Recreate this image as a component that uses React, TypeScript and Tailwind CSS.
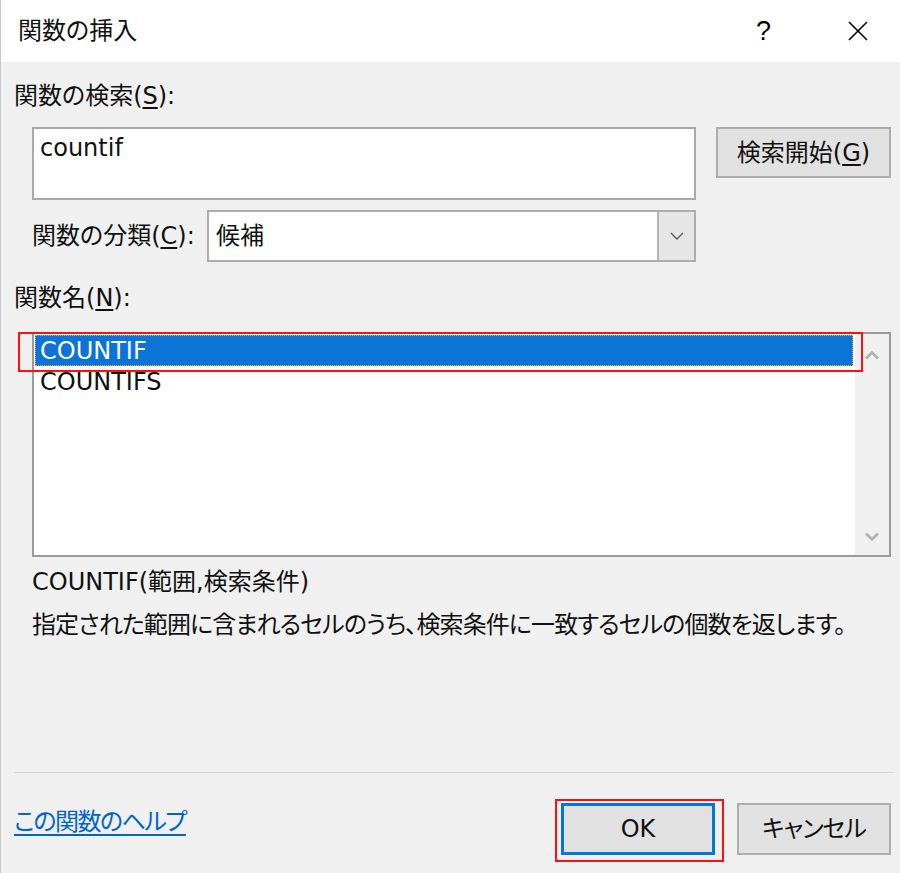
import React from "react";

function Chevron({ dir, className }: { dir: "up" | "down"; className?: string }) {
  return (
    <svg width="16" height="10" viewBox="0 0 16 10" className={className}>
      <path
        d={dir === "up" ? "M2 8.5 L8 2.5 L14 8.5" : "M2 1.5 L8 7.5 L14 1.5"}
        fill="none"
        stroke="currentColor"
        strokeWidth="2.6"
      />
    </svg>
  );
}

function Key({ k }: { k: string }) {
  return <span className="underline underline-offset-[3px]">{k}</span>;
}

export default function App() {
  return (
    <div className="flex h-[873px] w-[900px] flex-col overflow-hidden border-l border-[#c8c8c8] bg-[#f0f0f0] font-['DejaVu_Sans','Noto_Sans_CJK_JP',sans-serif] text-[24px] text-[#111] [font-feature-settings:'palt']">
      {/* Title bar */}
      <div className="flex h-[62px] items-center bg-white pl-[17px] pr-[31px]">
        <span className="leading-none">関数の挿入</span>
        <span className="ml-auto font-['Liberation_Sans',sans-serif] text-[27px] leading-none text-black">?</span>
        <svg width="22" height="22" viewBox="0 0 22 22" className="ml-[76px] text-black">
          <path d="M2 2 L20 20 M20 2 L2 20" stroke="currentColor" strokeWidth="1.6" />
        </svg>
      </div>

      {/* Body */}
      <div className="flex flex-col pl-[13px] pr-[9px] pt-[19px]">
        <div className="h-[30px] leading-[30px]">
          関数の検索(<Key k="S" />):
        </div>

        <div className="ml-[18px] mt-[16px] flex items-start">
          <div className="h-[73px] w-[664px] border-2 border-[#a9a9a9] bg-white pl-[6px] pt-[4px] leading-[30px]">
            countif
          </div>
          <button className="ml-[20px] flex h-[51px] w-[175px] items-center justify-center border-2 border-[#adadad] bg-[#e1e1e1] leading-none">
            検索開始(<Key k="G" />)
          </button>
        </div>

        <div className="ml-[18px] mt-[10px] flex h-[52px] items-center">
          <div className="w-[175px] leading-[30px]">
            関数の分類(<Key k="C" />):
          </div>
          <div className="flex h-[52px] w-[489px] border-2 border-[#adadad] bg-white">
            <div className="flex flex-1 items-center pl-[7px] leading-none">候補</div>
            <div className="flex w-[37px] items-center justify-center border-l-2 border-[#b4b4b4] bg-[#e6e6e6] text-[#5a5a5a]">
              <svg width="14" height="8" viewBox="0 0 14 8">
                <path d="M1 1 L7 7 L13 1" fill="none" stroke="currentColor" strokeWidth="1.4" />
              </svg>
            </div>
          </div>
        </div>

        <div className="mt-[21px] h-[30px] leading-[30px]">
          関数名(<Key k="N" />):
        </div>

        <div className="relative ml-[18px] mt-[19px] flex h-[225px] w-[859px] border-2 border-[#9a9a9a] bg-white">
          <div className="flex flex-1 flex-col pl-[1px] pr-[2px] pt-[1px]">
            <div className="flex h-[31px] items-center border border-dotted border-[#f3a64a] bg-[#0c74d7] pl-[4px] leading-none text-white">
              COUNTIF
            </div>
            <div className="flex h-[31px] items-center pl-[5px] leading-none">COUNTIFS</div>
          </div>
          <div className="flex w-[34px] flex-col items-center justify-between bg-[#f0f0f0] pb-[13px] pt-[16px] text-[#b0b0b0]">
            <Chevron dir="up" />
            <Chevron dir="down" />
          </div>
          <span className="pointer-events-none absolute -left-[16px] -top-[2px] h-[40px] w-[845px] border-2 border-[#ff1010]" />
        </div>

        <div className="ml-[18px] mt-[10px] h-[30px] leading-[30px]">COUNTIF(範囲,検索条件)</div>
        <div className="ml-[18px] mt-[13px] h-[30px] whitespace-nowrap leading-[30px] tracking-[-0.9px]">
          指定された範囲に含まれるセルのうち、検索条件に一致するセルの個数を返します。
        </div>

        <div className="mt-[132px] h-px w-[880px] bg-[#d4d4d4]" />

        <div className="mt-[30px] flex items-start">
          <a className="mt-[4px] h-[30px] leading-[30px] tracking-[-1.5px] text-[#0066cc] underline underline-offset-[4px]">
            この関数のヘルプ
          </a>
          <div className="relative ml-auto">
            <button className="flex h-[52px] w-[154px] items-center justify-center border-[3px] border-[#0078d7] bg-[#e1e1e1] leading-none">
              OK
            </button>
            <span className="pointer-events-none absolute -left-[6px] -top-[4px] h-[63px] w-[169px] border-2 border-[#ff1010]" />
          </div>
          <button className="ml-[22px] flex h-[52px] w-[154px] items-center justify-center border-2 border-[#adadad] bg-[#e1e1e1] leading-none tracking-[-1px]">
            キャンセル
          </button>
        </div>
      </div>
    </div>
  );
}
